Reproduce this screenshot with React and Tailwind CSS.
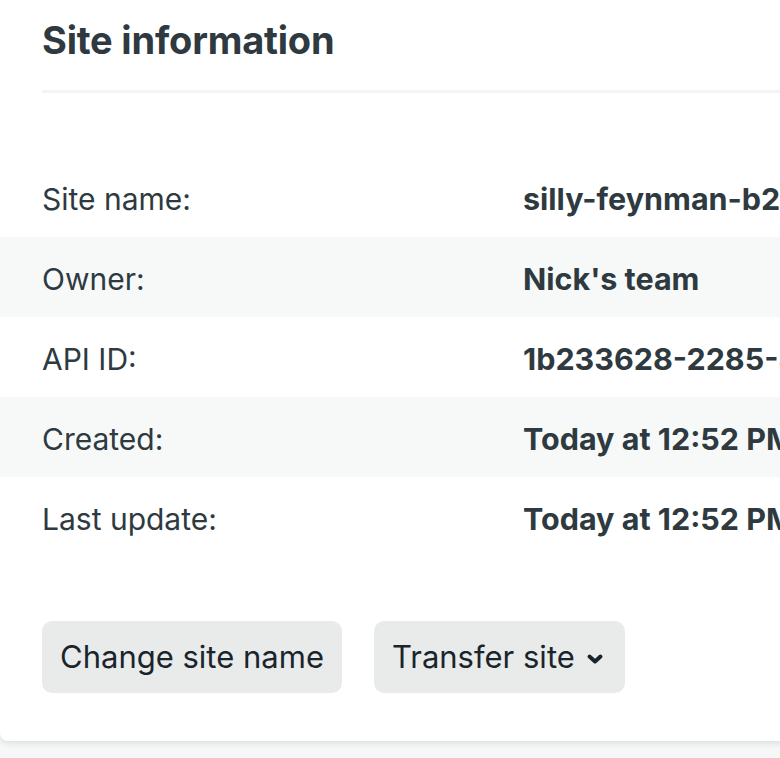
import React from 'react';

const rows = [
  { label: 'Site name:', value: 'silly-feynman-b2c4d1' },
  { label: 'Owner:', value: "Nick's team" },
  { label: 'API ID:', value: '1b233628-2285-4a1e-9c2f-7d3e8b6a0f12' },
  { label: 'Created:', value: 'Today at 12:52 PM' },
  { label: 'Last update:', value: 'Today at 12:52 PM' },
];

function ChevronDown() {
  return (
    <svg width="18" height="13" viewBox="0 0 18 13" className="ml-[11px] mt-[4px]">
      <path d="M3.5 3.5 L9 8.5 L14.5 3.5" fill="none" stroke="currentColor" strokeWidth="4" strokeLinecap="round" strokeLinejoin="round" />
    </svg>
  );
}

export default function App() {
  return (
    <div
      className="w-[780px] h-[758px] overflow-hidden bg-[#f6f8f8]"
      style={{ fontFamily: 'Inter, "Noto Sans", sans-serif' }}
    >
      <div className="w-[1100px] bg-white rounded-b-lg shadow-[0_2px_6px_rgba(14,30,37,0.12)] pb-12">
        <div className="px-[42px] pt-[15px]">
          <h2 className="text-[38px] leading-[50px] font-bold text-[#2e3a40] tracking-[-0.2px]">
            Site information
          </h2>
          <div className="mt-[25px] h-[3px] bg-[#f3f5f5]" />
        </div>

        <dl className="mt-[64px]">
          {rows.map((r, i) => (
            <div
              key={r.label}
              className={
                'flex items-center h-[80px] px-[42px] pt-[4px] ' + (i % 2 === 1 ? 'bg-[#f7f9f9]' : 'bg-white')
              }
            >
              <dt className="w-[481px] shrink-0 text-[30px] text-[#2e3a40]">{r.label}</dt>
              <dd className="shrink-0 text-[30.5px] font-bold text-[#2e3a40] whitespace-nowrap">{r.value}</dd>
            </div>
          ))}
        </dl>

        <div className="flex gap-[32px] px-[42px] mt-[64px]">
          <button className="h-[72px] px-[18px] rounded-[10px] bg-[#e9ebeb] text-[31px] text-[#1a252b]">
            Change site name
          </button>
          <button className="h-[72px] pl-[18px] pr-[21px] rounded-[10px] bg-[#e9ebeb] text-[31px] text-[#1a252b] flex items-center">
            Transfer site
            <ChevronDown />
          </button>
        </div>
      </div>
    </div>
  );
}
